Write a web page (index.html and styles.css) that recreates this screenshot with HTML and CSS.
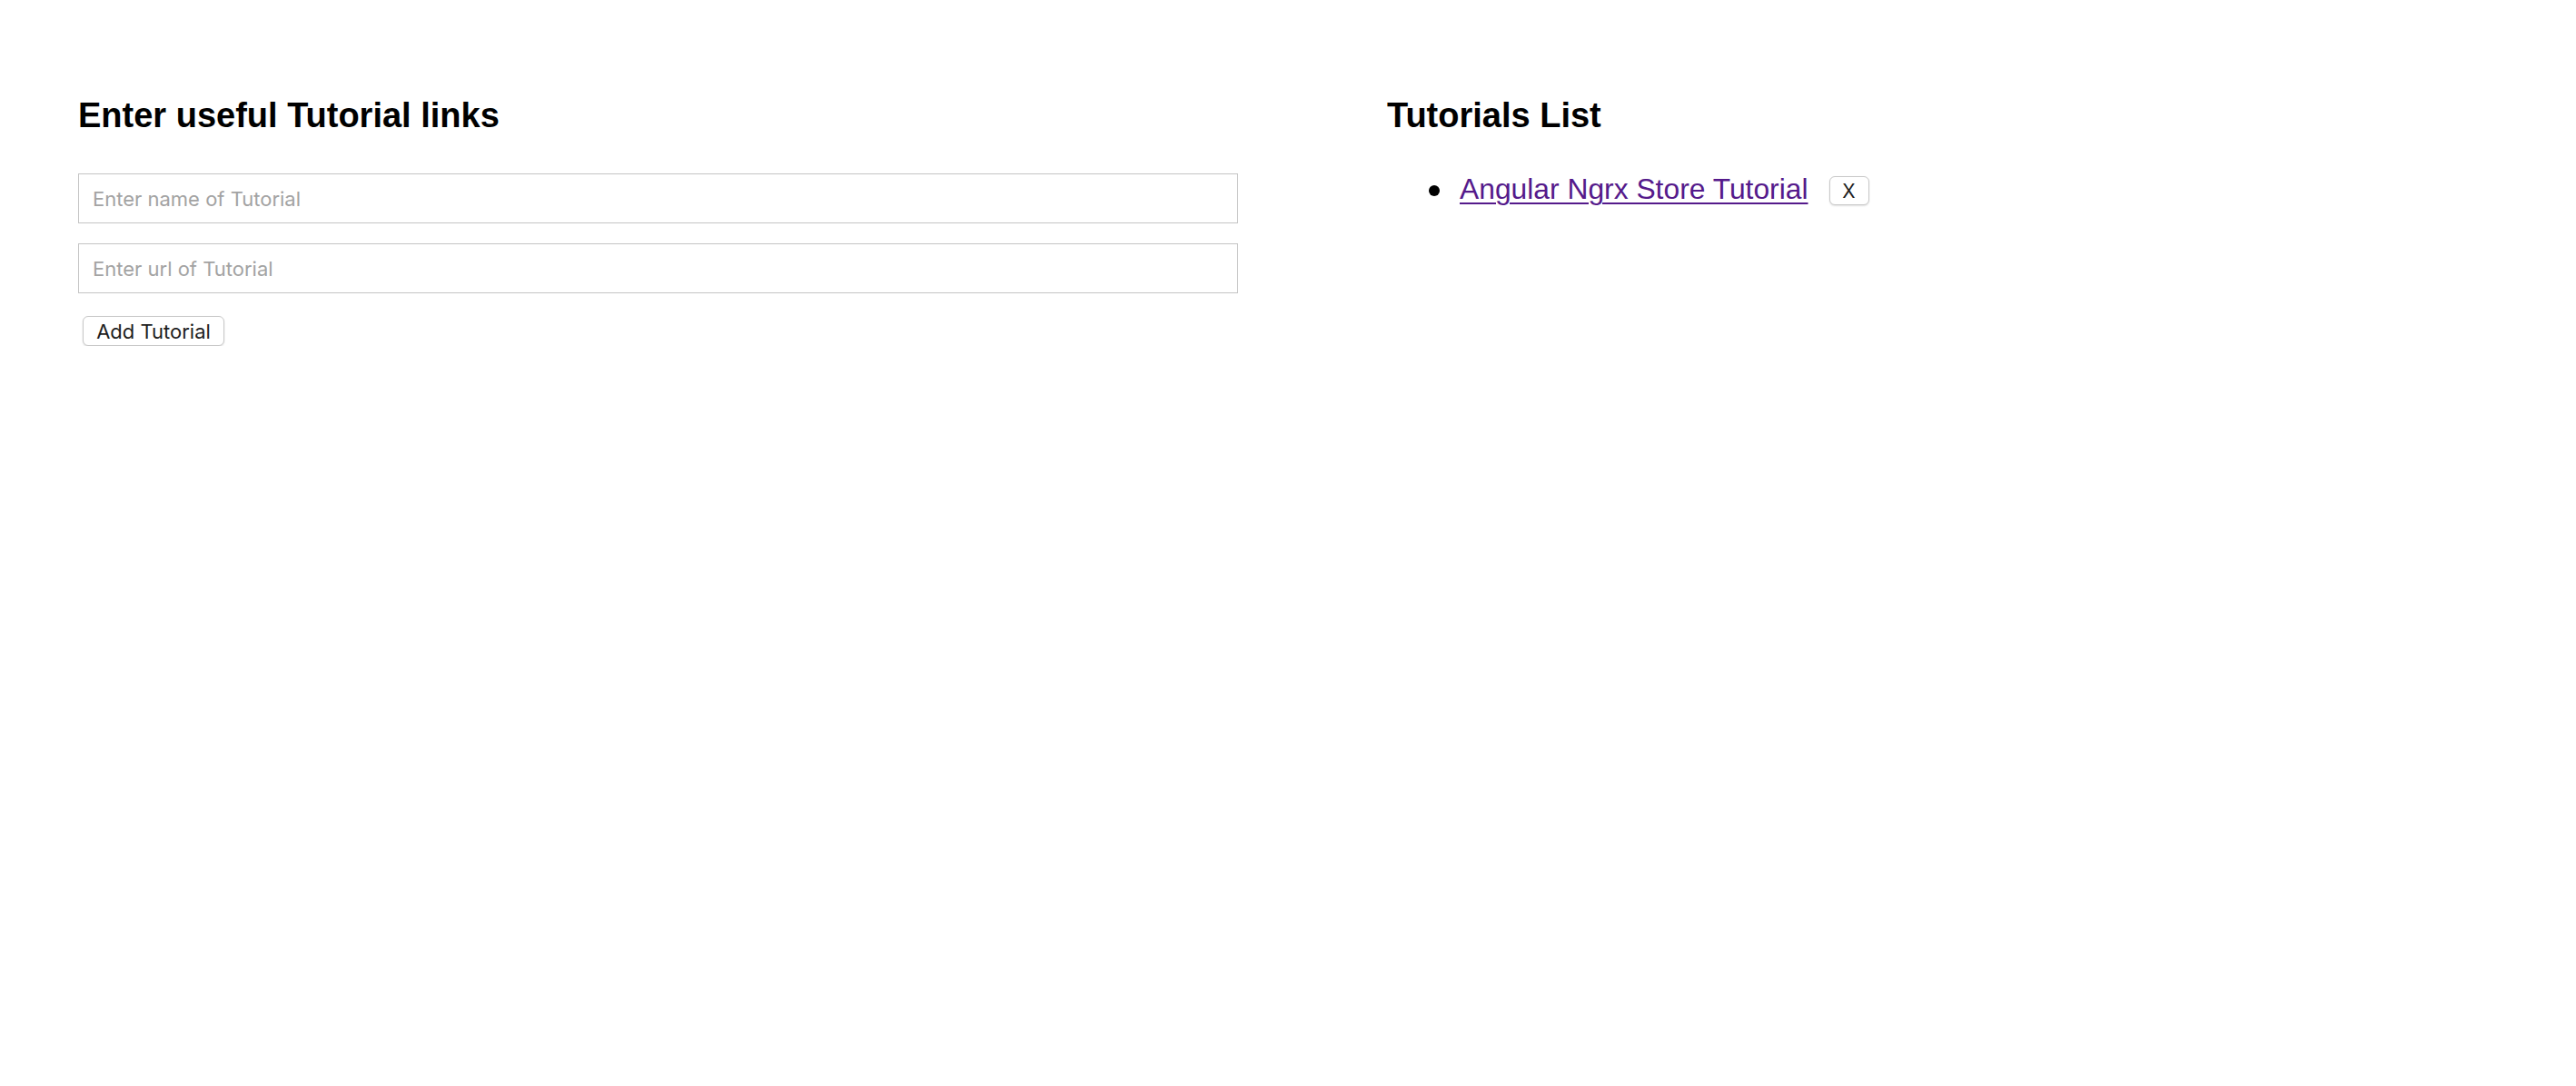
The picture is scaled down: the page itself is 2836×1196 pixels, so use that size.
FILE: index.html
```html
<!DOCTYPE html>
<html lang="en">
<head>
<meta charset="utf-8">
<title>Tutorials</title>
<link rel="stylesheet" href="styles.css">
</head>
<body>
<div class="page">
  <section class="form-col">
    <h2 class="title">Enter useful Tutorial links</h2>
    <input class="field field-name" type="text" placeholder="Enter name of Tutorial">
    <input class="field field-url" type="text" placeholder="Enter url of Tutorial">
    <button class="btn btn-add" type="button">Add Tutorial</button>
  </section>
  <section class="list-col">
    <h2 class="title">Tutorials List</h2>
    <ul class="tut-list">
      <li class="tut-item">
        <span class="bullet"></span>
        <a class="tut-link" href="#">Angular Ngrx Store Tutorial</a>
        <button class="btn btn-x" type="button">X</button>
      </li>
    </ul>
  </section>
</div>
</body>
</html>
```

FILE: styles.css
```css
html, body {
  margin: 0;
  padding: 0;
  background: #ffffff;
}

.page {
  display: flex;
  align-items: flex-start;
  gap: 164px;
  padding: 106px 0 0 86px;
}

.form-col {
  width: 1277px;
  display: flex;
  flex-direction: column;
  align-items: flex-start;
}

.list-col {
  flex: 1;
}

.title {
  margin: 0;
  font-family: "Liberation Sans", Arial, sans-serif;
  font-weight: bold;
  font-size: 38px;
  line-height: 43px;
  color: #000;
}

.field {
  box-sizing: border-box;
  width: 100%;
  height: 55px;
  margin: 0;
  padding: 0 15px;
  border: 1px solid #c4c4c4;
  border-radius: 0;
  background: #fff;
  font-family: Inter, "Noto Sans", sans-serif;
  font-size: 22px;
  color: #000;
  outline: none;
}

.field::placeholder {
  color: #a3a3a3;
}

.field-name {
  margin-top: 42px;
}

.field-url {
  margin-top: 22px;
}

.btn {
  box-sizing: border-box;
  margin: 0;
  background: #ffffff;
  border: 1px solid #c9c9c9;
  border-radius: 6px;
  box-shadow: 0 1px 2px rgba(0, 0, 0, 0.12);
  font-family: Inter, "Noto Sans", sans-serif;
  color: #1e1e1e;
  padding: 0;
  cursor: pointer;
}

.btn-add {
  margin: 25px 0 0 5px;
  width: 156px;
  height: 33px;
  font-size: 22px;
}

.tut-list {
  list-style: none;
  margin: 41px 0 0 0;
  padding: 0 0 0 46px;
}

.tut-item {
  display: flex;
  align-items: center;
}

.bullet {
  width: 12px;
  height: 12px;
  border-radius: 50%;
  background: #000;
  margin-right: 22px;
  margin-top: 4px;
}

.tut-link {
  font-family: "Liberation Sans", Arial, sans-serif;
  font-size: 31.8px;
  line-height: 36px;
  color: #551a8b;
  text-decoration: underline;
  text-decoration-thickness: 2px;
  text-underline-offset: 4px;
}

.btn-x {
  margin-left: 23px;
  margin-top: 4px;
  width: 44px;
  height: 32px;
  font-size: 21px;
}
```
